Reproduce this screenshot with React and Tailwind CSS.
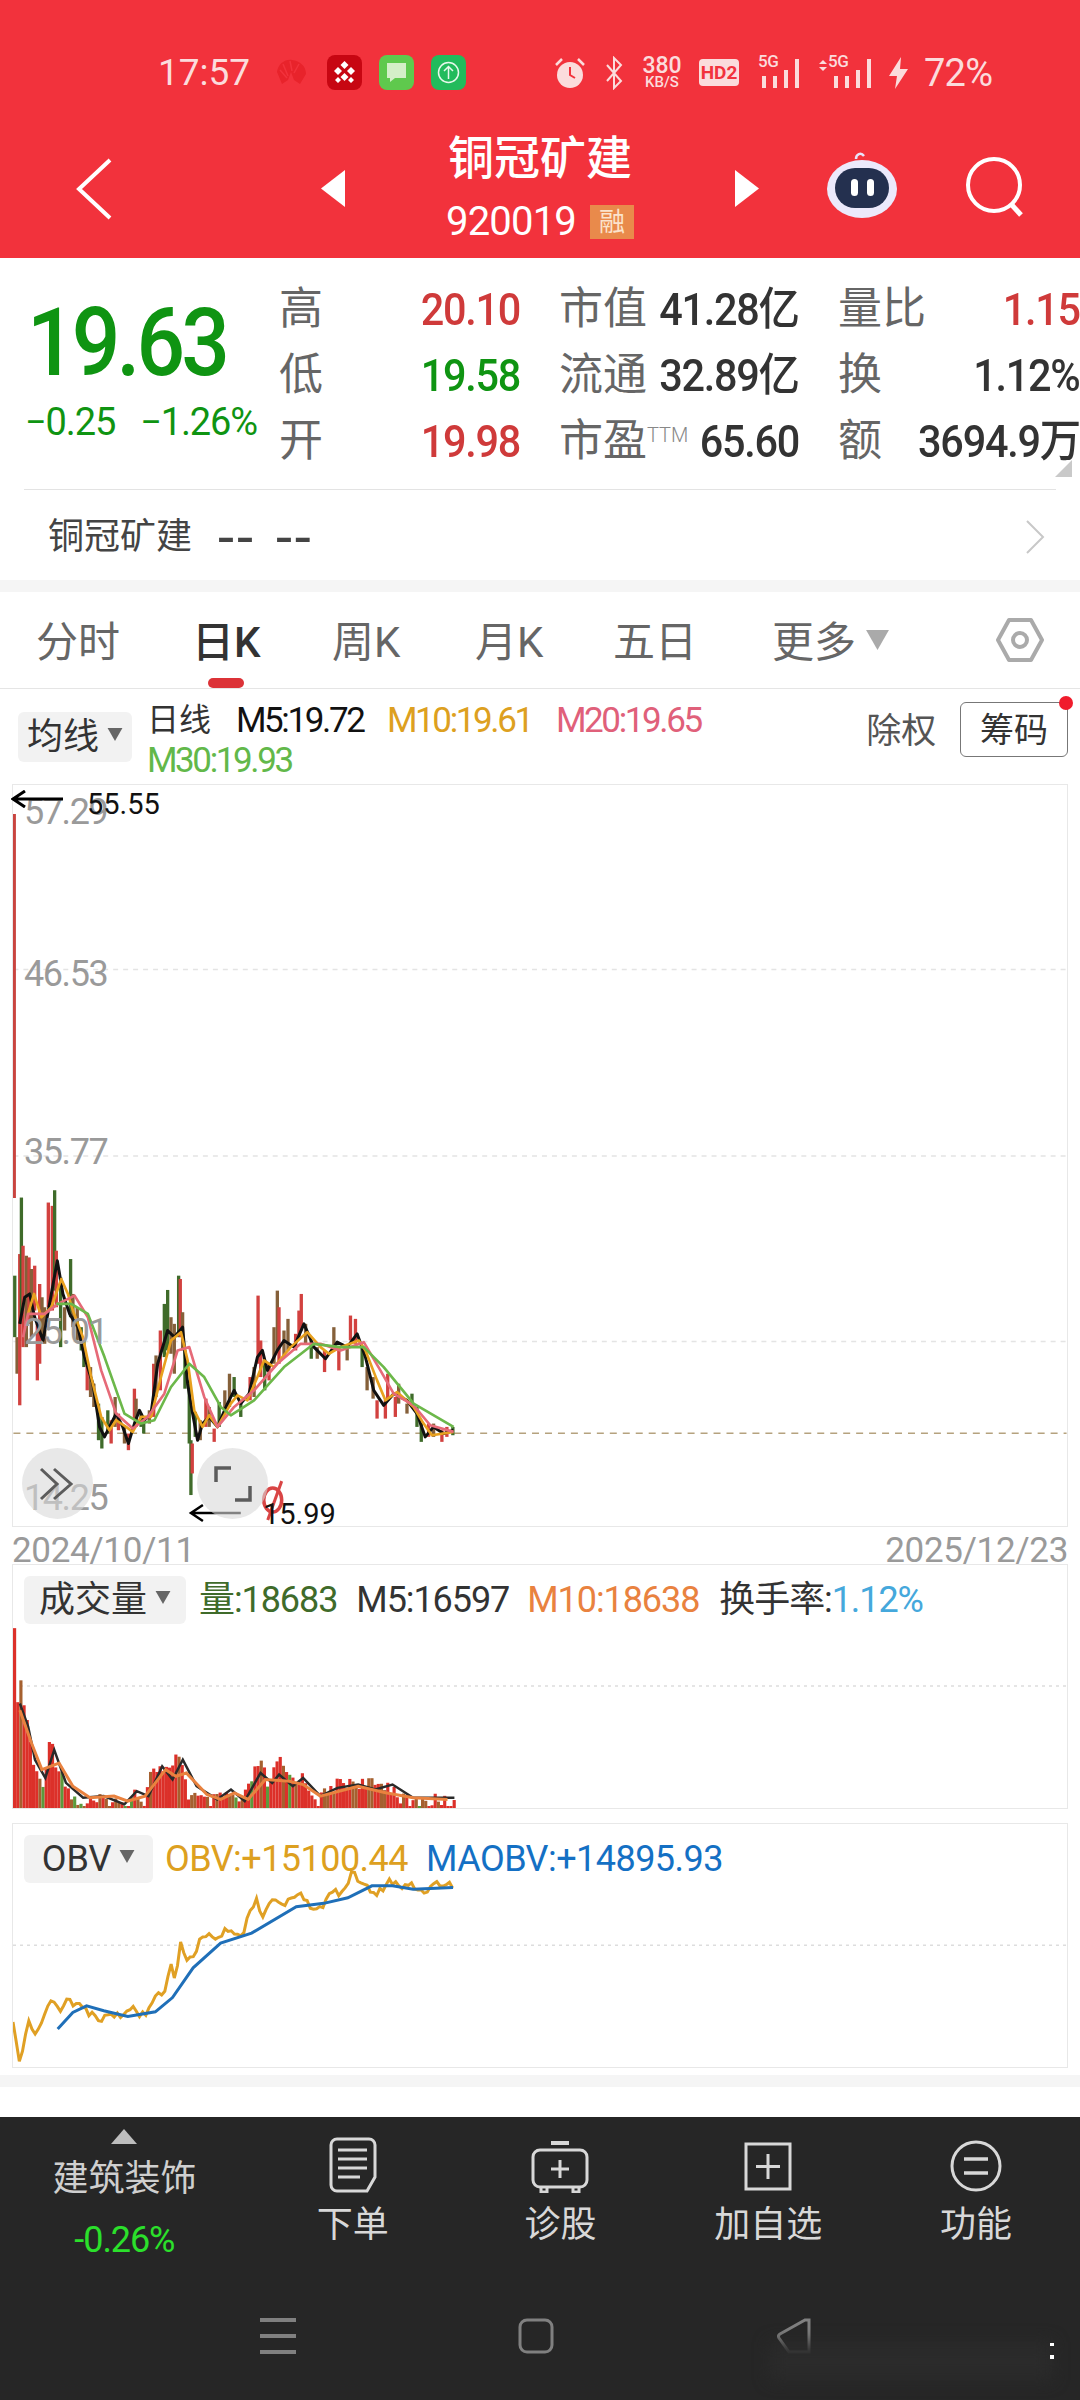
import React from 'react';

const RED = '#d2413f';
const GRN = '#3f6b2a';
const BRN = '#85603a';

// wicks traced in zoom coordinates: [x, top, bottom, colour]
const candles = [
  [40,375,560,GRN],[47,560,670,BRN],[55,310,765,RED],[60,140,520,GRN],[65,285,590,RED],[75,315,590,BRN],[83,320,520,RED],[90,355,560,BRN],
  [100,345,480,RED],[108,520,690,RED],[115,400,640,RED],[122,440,560,BRN],[130,470,580,BRN],[141,155,470,RED],[153,165,480,RED],[160,118,420,GRN],
  [165,300,470,RED],[178,380,590,GRN],[190,470,540,BRN],[208,325,500,GRN],[215,430,530,BRN],[228,470,570,BRN],[240,530,600,GRN],[248,570,650,GRN],
  [258,640,720,RED],[268,650,740,BRN],[278,700,770,BRN],[292,760,870,GRN],[302,800,895,GRN],[320,780,850,GRN],[330,810,880,RED],[342,740,830,BRN],
  [352,790,840,RED],[370,830,880,BRN],[382,850,900,RED],[400,715,810,RED],[405,745,830,BRN],[420,790,830,GRN],[428,810,850,GRN],[445,780,820,BRN],
  [458,640,800,RED],[465,615,740,BRN],[478,540,720,RED],[490,460,620,GRN],[500,418,600,GRN],[510,500,610,BRN],[520,520,670,BRN],[533,375,560,GRN],
  [538,385,560,RED],[545,485,600,BRN],[552,600,715,GRN],[565,690,880,GRN],[570,870,1035,GRN],[574,880,970,RED],[583,785,860,GRN],[598,810,870,BRN],
  [615,745,830,RED],[625,770,830,BRN],[640,835,875,RED],[655,755,830,GRN],[672,720,780,BRN],[686,670,770,BRN],[700,680,740,GRN],[720,750,800,GRN],
  [748,680,750,RED],[760,650,740,BRN],[772,435,640,RED],[780,570,680,RED],[792,640,720,GRN],[805,640,690,RED],[820,530,640,BRN],[830,420,600,BRN],
  [835,470,640,RED],[850,540,620,BRN],[862,505,600,BRN],[885,550,600,RED],[895,480,560,RED],[902,430,540,RED],[915,520,580,BRN],[932,570,625,GRN],
  [950,590,625,BRN],[972,600,665,RED],[1000,530,600,BRN],[1015,590,660,RED],[1040,590,630,BRN],[1050,495,570,RED],[1065,505,580,RED],[1085,590,650,GRN],
  [1100,650,720,BRN],[1118,680,745,BRN],[1130,750,805,RED],[1155,750,805,RED],[1162,670,750,RED],[1185,740,800,RED],[1195,700,760,BRN],[1220,760,790,BRN],
  [1235,730,770,GRN],[1250,770,830,GRN],[1263,820,875,GRN],[1285,820,860,RED],[1300,820,860,BRN],[1325,840,875,RED],[1340,830,860,RED],[1358,830,855,GRN],
];

const ma5 = '55,520 70,440 85,430 100,500 125,570 150,430 168,330 185,430 205,490 230,530 250,620 275,700 295,830 310,860 325,830 345,790 365,830 382,880 400,820 415,780 430,810 450,790 470,640 500,540 520,560 545,530 560,700 575,790 590,870 605,820 625,800 650,830 680,760 700,720 720,760 745,730 770,620 785,600 800,660 830,600 850,570 880,590 910,520 940,590 975,625 1010,575 1040,590 1070,550 1095,620 1120,720 1150,765 1180,730 1220,750 1250,790 1275,860 1300,830 1330,850 1360,840';
const ma10 = '80,490 98,430 120,500 150,470 180,385 200,430 215,480 245,560 270,680 300,800 325,840 345,810 375,830 395,845 420,800 450,800 480,680 510,570 540,545 560,630 580,780 605,830 625,795 650,830 690,760 710,735 740,750 770,680 790,630 820,650 870,590 920,545 960,590 985,610 1020,590 1075,570 1095,600 1130,690 1155,750 1190,725 1240,770 1270,820 1295,855 1360,845';
const ma20 = '65,560 80,490 130,490 170,460 220,435 260,500 300,660 345,790 395,835 440,800 490,730 530,600 565,590 610,740 650,830 700,770 760,720 830,640 900,580 960,580 1020,600 1090,575 1140,660 1180,730 1240,765 1290,825 1360,845';
const ma30 = '165,460 210,460 260,490 310,620 370,790 420,820 460,810 510,710 565,640 610,680 660,770 690,795 760,750 850,650 940,580 1020,590 1090,590 1150,650 1240,760 1360,830';

const volEnvelope = [[18,262],[24,500],[27,415],[37,530],[48,680],[60,720],[68,565],[78,640],[90,690],[100,750],[120,775],[160,755],[180,790],[190,720],[205,770],[220,655],[232,670],[245,680],[258,610],[270,740],[300,770],[330,745],[350,770],[374,638],[388,720],[402,640],[420,695],[435,690],[460,760],[485,715],[510,700],[535,715],[560,710],[590,770],[640,760],[660,775]];
const interp = (pts, x) => {
  for (let i = 1; i < pts.length; i++) {
    const [x0, y0] = pts[i - 1];
    const [x1, y1] = pts[i];
    if (x <= x1) return y0 + ((y1 - y0) * (x - x0)) / (x1 - x0);
  }
  return pts[pts.length - 1][1];
};
const rand = (i) => {
  const v = Math.sin(i * 12.9898) * 43758.5453;
  return v - Math.floor(v);
};
const volBars = Array.from({ length: 140 }, (_, i) => {
  const x = 18 + i * 4.6;
  const top = Math.min(interp(volEnvelope, x) + rand(i) * 45, 800);
  const r = rand(i + 300);
  return { x, top, color: r > 0.9 ? '#5c9a3c' : r > 0.72 ? '#a5602f' : '#dc3029' };
});
const volMa5 = '28,490 40,560 50,660 65,715 78,630 95,730 120,775 150,770 180,795 198,755 215,770 235,680 250,720 265,660 285,740 315,780 335,750 355,785 378,700 395,730 405,705 425,740 440,715 465,770 490,745 520,735 545,750 570,735 600,775 640,775 660,775';
const volMa10 = '28,510 45,610 60,690 85,670 105,740 130,775 165,770 185,785 210,770 240,690 255,710 270,700 300,765 320,780 340,760 360,780 385,720 420,725 440,735 465,770 520,740 560,760 600,775 650,780';

const obvBase = [[18,630],[27,765],[40,635],[50,680],[62,625],[75,550],[85,610],[98,550],[108,585],[120,590],[142,630],[160,605],[180,622],[192,585],[200,610],[215,600],[225,545],[235,565],[248,465],[255,505],[262,390],[270,440],[277,450],[295,365],[310,380],[335,350],[350,375],[372,258],[380,310],[400,255],[410,290],[420,265],[435,238],[448,285],[470,285],[482,230],[495,245],[512,185],[525,210],[545,255],[565,205],[585,230],[597,215],[612,240],[635,215],[658,218]];
// the line is jagged day to day
const obvLine = Array.from({ length: 140 }, (_, i) => {
  const x = 18 + i * 4.6;
  return `${x},${interp(obvBase, x) + (rand(i + 77) - 0.5) * 22}`;
}).join(' ');
const maobvLine = '83,655 105,605 125,585 150,600 185,617 225,603 250,560 280,470 320,395 365,365 430,285 470,275 505,258 540,222 570,222 600,232 658,227';

const Caret = ({ className }) => (
  <svg viewBox="0 0 16 14" className={className}><path d="M0 0h16L8 14z" fill="currentColor" /></svg>
);

const Stat = ({ label, value, color }) => (
  <div className="flex items-center justify-between h-[66px] pt-[2px]">
    <span className="text-[44px] leading-none text-[#666] whitespace-nowrap">{label}</span>
    <span className={`inline-block origin-right scale-x-[.92] text-[45px] leading-none font-medium tracking-[-0.03em] whitespace-nowrap ${color}`}>{value}</span>
  </div>
);

const Chip = ({ children, className }) => (
  <div className={`flex items-center justify-center gap-[8px] h-[48px] bg-[#f2f2f2] rounded-md text-[#333] text-[36px] leading-none ${className}`}>
    {children}
    <Caret className="w-[16px] h-[13px] text-[#666] mb-[6px]" />
  </div>
);

const Signal = ({ className, wide }) => (
  <div className={`relative ${className}`}>
    <span className={`absolute top-[-3px] text-[17px] leading-none font-medium tracking-[-0.03em] ${wide ? 'left-[12px]' : 'left-0'}`}>5G</span>
    <svg viewBox={wide ? '0 0 61 34' : '14 0 46 34'} className="w-full h-full">
      <path d="M18 20h4v12h-4zM29 20h4v12h-4zM40 14h4v18h-4zM51 3h4v29h-4z" fill="#fbdcdc" />
      {wide && <path d="M3 8l4-4 4 4zM3 11h8l-4 4z" fill="#fbdcdc" />}
    </svg>
  </div>
);

const StatusBar = () => (
  <div className="flex items-center h-[35px] pl-[158px] text-[#fbdcdc]">
    <span className="text-[37px] leading-none w-[92px]">17:57</span>
    <svg viewBox="0 0 33 30" className="w-[33px] h-[30px] ml-[25px]">
      <path d="M2 14C3 6 10 1 17 2c8 1 14 6 14 14l-6 10-6-4-3-8-3 8-6 4z" fill="#e8232b" />
      <path d="M8 6l5 12M15 3l2 10M24 6l-5 9M5 12l7 8" stroke="#f2323c" strokeWidth="1.5" />
    </svg>
    <svg viewBox="0 0 35 35" className="w-[35px] h-[35px] ml-[19px]">
      <rect width="35" height="35" rx="8" fill="#c70612" />
      <path d="M17.5 6l4 4-4 4-4-4zM11 12l4 4-4 4-4-4zM24 12l4 4-4 4-4-4zM17.5 18l4 4-4 4-4-4zM11 22l3 3-3 3-3-3zM24 22l3 3-3 3-3-3z" fill="#fff" />
    </svg>
    <svg viewBox="0 0 35 35" className="w-[35px] h-[35px] ml-[17px]">
      <rect width="35" height="35" rx="8" fill="#5fc94d" />
      <path d="M8 8h19v15H16l-5 4v-4H8z" fill="#d4efc8" />
    </svg>
    <svg viewBox="0 0 35 35" className="w-[35px] h-[35px] ml-[17px]">
      <rect width="35" height="35" rx="8" fill="#22bb5c" />
      <circle cx="17.5" cy="17.5" r="10" fill="none" stroke="#e6f8ec" strokeWidth="1.5" />
      <path d="M17.5 24V12M13 16l4.500-4.500L22 16" fill="none" stroke="#e6f8ec" strokeWidth="1.500" />
    </svg>
    <svg viewBox="0 0 32 34" className="w-[32px] h-[34px] ml-[88px]">
      <circle cx="16" cy="19" r="13" fill="#fbdcdc" />
      <path d="M16 11v8l5 3" fill="none" stroke="#f2323c" strokeWidth="2" />
      <path d="M2 9l6-6M30 9l-6-6" stroke="#fbdcdc" strokeWidth="2.500" />
    </svg>
    <svg viewBox="0 0 20 34" className="w-[20px] h-[34px] ml-[18px]">
      <path d="M3 9l14 16-7 7V2l7 7L3 25" fill="none" stroke="#fbdcdc" strokeWidth="2" />
    </svg>
    <div className="flex flex-col items-center w-[46px] ml-[15px] font-medium">
      <span className="text-[23px] leading-[19px]">380</span>
      <span className="text-[15px] leading-[15px]">KB/S</span>
    </div>
    <div className="flex items-center justify-center w-[40px] h-[27px] ml-[14px] rounded bg-[#fbdcdc] text-[#f2323c] text-[19px] font-bold leading-none">HD2</div>
    <Signal className="w-[46px] h-[34px] ml-[19px]" />
    <Signal className="w-[61px] h-[34px] ml-[12px]" wide />
    <svg viewBox="0 0 24 34" className="w-[24px] h-[34px] ml-[10px]">
      <path d="M14 1L2 20h8l-2 13 13-20h-8z" fill="#fbdcdc" />
    </svg>
    <span className="text-[38px] leading-none ml-[13px] tracking-[-0.02em]">72%</span>
  </div>
);

const Header = () => (
  <div className="h-[258px] bg-[#f2323c] pt-[55px]">
    <StatusBar />
    <div className="flex items-center h-[103px] mt-[47px] pl-[76px]">
      <svg viewBox="0 0 36 62" className="w-[36px] h-[62px]">
        <path d="M34 2L3 31l31 29" fill="none" stroke="#fff" strokeWidth="4" />
      </svg>
      <svg viewBox="0 0 24 37" className="w-[24px] h-[37px] ml-[209px]"><path d="M24 0v37L0 18.500z" fill="#fff" /></svg>
      <div className="flex flex-col items-center w-[390px] text-white -mt-[3px]">
        <span className="text-[46px] leading-[46px] font-medium">铜冠矿建</span>
        <div className="flex items-center gap-[14px] mt-[24px]">
          <span className="text-[40px] leading-[34px] tracking-[-0.02em]">920019</span>
          <span className="flex items-center justify-center w-[44px] h-[34px] bg-[#e98a4b] text-[#fbe3cc] text-[26px] leading-none">融</span>
        </div>
      </div>
      <svg viewBox="0 0 24 37" className="w-[24px] h-[37px]"><path d="M0 0v37l24-18.500z" fill="#fff" /></svg>
      <svg viewBox="0 0 72 67" className="w-[72px] h-[67px] ml-[67px] -mt-[8px]">
        <path d="M30 8c0-5 5-7 8-3" fill="none" stroke="#e8e4fb" strokeWidth="2.500" />
        <ellipse cx="36" cy="38" rx="35" ry="29" fill="#ece9fb" />
        <rect x="9" y="17" width="54" height="40" rx="20" fill="#24304f" />
        <rect x="25" y="28" width="7" height="17" rx="3.500" fill="#fff" />
        <rect x="41" y="28" width="7" height="17" rx="3.500" fill="#fff" />
      </svg>
      <svg viewBox="0 0 62 62" className="w-[62px] h-[62px] ml-[67px] -mt-[4px]">
        <circle cx="29" cy="29" r="26" fill="none" stroke="#fff" strokeWidth="4" />
        <path d="M46 48l10 11" stroke="#fff" strokeWidth="5" />
      </svg>
    </div>
  </div>
);

const Quote = () => (
  <div className="relative h-[322px] bg-white">
    <div className="flex pt-[17px]">
      <div className="flex flex-col w-[280px] pl-[25px] text-[#0f9412]">
        <span className="inline-block origin-left scale-x-[.91] text-[94px] leading-[88px] mt-[24px] ml-[2px] font-medium tracking-[-0.045em]">19.63</span>
        <div className="flex gap-[25px] mt-[16px] text-[38px] leading-none tracking-[-0.03em] whitespace-nowrap">
          <span>−0.25</span>
          <span>−1.26%</span>
        </div>
      </div>
      <div className="grid grid-cols-[241px_240px_242px] gap-x-[39px]">
        <Stat label="高" value="20.10" color="text-[#cf3a3a]" />
        <Stat label="市值" value="41.28亿" color="text-[#333]" />
        <Stat label="量比" value="1.15" color="text-[#cf3a3a]" />
        <Stat label="低" value="19.58" color="text-[#0f9412]" />
        <Stat label="流通" value="32.89亿" color="text-[#333]" />
        <Stat label="换" value="1.12%" color="text-[#333]" />
        <Stat label="开" value="19.98" color="text-[#cf3a3a]" />
        <Stat label={<>市盈<sup className="text-[20px] font-light text-[#888] top-[-14px] align-baseline relative">TTM</sup></>} value="65.60" color="text-[#333]" />
        <Stat label="额" value="3694.9万" color="text-[#333]" />
      </div>
    </div>
    <div className="absolute right-[8px] top-[202px] w-0 h-0 border-l-[17px] border-l-transparent border-b-[17px] border-b-[#c9c9c9]" />
    <div className="h-[1px] bg-[#e3e3e3] mx-[24px] mt-[16px]" />
    <div className="flex items-center h-[90px] pl-[48px] pr-[35px] pt-[3px]">
      <span className="text-[36px] leading-none text-[#444]">铜冠矿建</span>
      <span className="text-[58px] leading-none text-[#444] ml-[26px] tracking-[0.05em]">--</span>
      <span className="text-[58px] leading-none text-[#444] ml-[20px] tracking-[0.05em]">--</span>
      <svg viewBox="0 0 20 34" className="w-[20px] h-[34px] ml-auto">
        <path d="M2 1l16 16L2 33" fill="none" stroke="#c8c8c8" strokeWidth="2" />
      </svg>
    </div>
  </div>
);

const Tab = ({ width, children, active }) => (
  <div className={`relative flex items-center h-full pt-[6px] ${width} text-[42px] leading-none ${active ? 'text-[#333] font-medium' : 'text-[#666]'}`}>
    {children}
  </div>
);

const Tabs = () => (
  <div className="flex items-center h-[97px] pl-[36px] border-b border-[#e5e5e5]">
    <Tab width="w-[156px]">分时</Tab>
    <Tab width="w-[140px]" active>
      日K
      <div className="absolute left-[16px] bottom-0 w-[36px] h-[10px] bg-[#dc3237] rounded-full" />
    </Tab>
    <Tab width="w-[143px]">周K</Tab>
    <Tab width="w-[138px]">月K</Tab>
    <Tab width="w-[159px]">五日</Tab>
    <Tab width="w-[224px]">
      更多
      <Caret className="w-[23px] h-[20px] text-[#aaa] ml-[10px] mb-[6px]" />
    </Tab>
    <svg viewBox="0 0 48 46" className="w-[48px] h-[46px]">
      <path d="M13 3h22l11 20-11 20H13L2 23z" fill="none" stroke="#aaa" strokeWidth="4" strokeLinejoin="round" />
      <circle cx="24" cy="23" r="7" fill="none" stroke="#aaa" strokeWidth="4" />
    </svg>
  </div>
);

const Legend = () => (
  <div className="flex h-[95px] pl-[18px] pr-[12px]">
    <Chip className="w-[114px] h-[50px] mt-[23px] text-[34px]">均线</Chip>
    <div className="flex flex-col ml-[15px] text-[35px] leading-none tracking-[-0.068em] pt-[13px] w-[701px]">
      <div className="flex items-center h-[36px]">
        <span className="text-[#333] w-[89px] text-[32px] tracking-normal">日线</span>
        <span className="text-[#111] w-[151px]">M5:19.72</span>
        <span className="text-[#dda020] w-[169px]">M10:19.61</span>
        <span className="text-[#e0607a]">M20:19.65</span>
      </div>
      <span className="text-[#62b84a] mt-[5px]">M30:19.93</span>
    </div>
    <span className="text-[35px] leading-none text-[#555] mt-[25px] ml-[19px] w-[94px]">除权</span>
    <div className="relative flex items-center justify-center w-[108px] h-[55px] mt-[13px] border border-[#777] rounded-md text-[34px] leading-none text-[#333]">
      筹码
      <div className="absolute -right-[6px] -top-[7px] w-[14px] h-[14px] rounded-full bg-[#f01c2c]" />
    </div>
  </div>
);

const PriceLabel = ({ className, children }) => (
  <span className={`absolute left-[11px] text-[#9a9a9a] text-[36px] tracking-[-0.04em] leading-none ${className}`}>{children}</span>
);

const PriceChart = () => (
  <div className="relative h-[743px] mx-[12px] border border-[#e8e8e8]">
    <svg viewBox="12 783 1056 743" className="absolute inset-0 w-full h-full">
      {[968, 1155, 1341].map((y) => (
        <line key={y} x1="12" x2="1068" y1={y} y2={y} stroke="#e4e4e4" strokeWidth="1.500" strokeDasharray="5 5" />
      ))}
      <line x1="12" x2="1068" y1="1433" y2="1433" stroke="#b5a27e" strokeWidth="1.500" strokeDasharray="7 6" />
      <line x1="13" x2="13" y1="812" y2="1197" stroke="#c9443f" strokeWidth="3" />
      <g transform="translate(0 1150) scale(0.3333)">
        {candles.map(([x, t, b, c], i) => (
          <line key={i} x1={x} x2={x} y1={t} y2={b} stroke={c} strokeWidth="10" />
        ))}
        <polyline points={ma5} fill="none" stroke="#111" strokeWidth="9" strokeLinejoin="round" />
        <polyline points={ma10} fill="none" stroke="#e8a11f" strokeWidth="8" strokeLinejoin="round" />
        <polyline points={ma20} fill="none" stroke="#e66a78" strokeWidth="8" strokeLinejoin="round" />
        <polyline points={ma30} fill="none" stroke="#6cb84a" strokeWidth="8" strokeLinejoin="round" />
      </g>
      <path d="M240 1513H190M202 1505l-12 8 12 8" fill="none" stroke="#000" strokeWidth="2.500" />
      <ellipse cx="272" cy="1500" rx="9" ry="12" fill="none" stroke="#d94545" strokeWidth="3.500" />
      <path d="M281 1481l-14 39" stroke="#d94545" strokeWidth="3" />
    </svg>
    <PriceLabel className="top-[9px]">57.29</PriceLabel>
    <PriceLabel className="top-[171px]">46.53</PriceLabel>
    <PriceLabel className="top-[349px]">35.77</PriceLabel>
    <PriceLabel className="top-[529px]">25.01</PriceLabel>
    <PriceLabel className="top-[695px]">14.25</PriceLabel>
    {/* the high marker sits on top of the axis label */}
    <svg viewBox="0 0 52 18" className="absolute left-[-2px] top-[5px] w-[52px] h-[18px]">
      <path d="M52 9H2M14 1L2 9l12 8" fill="none" stroke="#000" strokeWidth="3" />
    </svg>
    <span className="absolute left-[74px] top-[5px] text-[29px] leading-none text-[#111]">55.55</span>
    <span className="absolute left-[250px] top-[715px] text-[29px] leading-none text-[#111]">15.99</span>
    <div className="absolute left-[9px] top-[663px] flex items-center justify-center w-[71px] h-[71px] rounded-full bg-[#d8d8d8]/60">
      <svg viewBox="0 0 40 34" className="w-[40px] h-[34px]">
        <path d="M3 2l16 15L3 32M16 2l17 15-17 15" fill="none" stroke="#5c5c5c" strokeWidth="3" />
      </svg>
    </div>
    <div className="absolute left-[184px] top-[663px] flex items-center justify-center w-[71px] h-[71px] rounded-full bg-[#d8d8d8]/60">
      <svg viewBox="0 0 38 36" className="w-[38px] h-[36px]">
        <path d="M2 16V2h15M36 20v14H21" fill="none" stroke="#5c5c5c" strokeWidth="3.500" />
      </svg>
    </div>
  </div>
);

const VolumeChart = () => (
  <div className="relative h-[245px] mx-[12px] border border-[#e8e8e8]">
    <svg viewBox="18 71 1533 735" preserveAspectRatio="none" className="absolute inset-0 w-full h-full">
      <line x1="18" x2="1550" y1="437" y2="437" stroke="#ddd" strokeWidth="1.500" strokeDasharray="3 4" vectorEffect="non-scaling-stroke" />
      {volBars.map((b, i) => (
        <rect key={i} x={b.x} y={b.top} width="4.600" height={808 - b.top} fill={b.color} />
      ))}
      <polyline points={volMa5} fill="none" stroke="#2a2a2a" strokeWidth="2.500" vectorEffect="non-scaling-stroke" />
      <polyline points={volMa10} fill="none" stroke="#e9823f" strokeWidth="3" vectorEffect="non-scaling-stroke" />
    </svg>
    <div className="relative flex items-center h-[48px] mt-[11px] ml-[11px] text-[36px] leading-none tracking-[-0.03em] whitespace-nowrap">
      <Chip className="w-[162px] tracking-normal">成交量</Chip>
      <span className="text-[#3f6b2a] ml-[13px]">量:18683</span>
      <span className="text-[#333] ml-[19px]">M5:16597</span>
      <span className="text-[#e9823f] ml-[18px]">M10:18638</span>
      <span className="text-[#333] ml-[20px]">换手率:</span>
      <span className="text-[#45a8dc]">1.12%</span>
    </div>
  </div>
);

const ObvChart = () => (
  <div className="relative h-[245px] mx-[12px] border border-[#e8e8e8]">
    <svg viewBox="18 35 1533 735" preserveAspectRatio="none" className="absolute inset-0 w-full h-full">
      <line x1="18" x2="1550" y1="402" y2="402" stroke="#ddd" strokeWidth="1.500" strokeDasharray="3 4" vectorEffect="non-scaling-stroke" />
      <polyline points={obvLine} fill="none" stroke="#e0a024" strokeWidth="3" vectorEffect="non-scaling-stroke" />
      <polyline points={maobvLine} fill="none" stroke="#1f6fb8" strokeWidth="3" vectorEffect="non-scaling-stroke" />
    </svg>
    <div className="relative flex items-center h-[48px] mt-[11px] ml-[11px] text-[36px] leading-none tracking-[-0.015em] whitespace-nowrap">
      <Chip className="w-[129px] tracking-normal">OBV</Chip>
      <span className="text-[#dda020] ml-[12px]">OBV:+15100.44</span>
      <span className="text-[#1470c4] ml-[18px]">MAOBV:+14895.93</span>
    </div>
  </div>
);

const ToolItem = ({ icon, label }) => (
  <div className="flex flex-col items-center w-[208px] text-[#d8d8d8]">
    <div className="flex items-end justify-center h-[64px]">{icon}</div>
    <span className="text-[36px] leading-none mt-[14px]">{label}</span>
  </div>
);

const Footer = () => (
  <div className="h-[285px] bg-[#262626]">
    <div className="flex h-[178px] pt-[12px]">
      <div className="flex flex-col items-center w-[249px]">
        <svg viewBox="0 0 26 15" className="w-[26px] h-[15px]"><path d="M13 0l13 15H0z" fill="#bdbdbd" /></svg>
        <span className="text-[36px] leading-none text-[#cfcfcf] mt-[17px]">建筑装饰</span>
        <span className="text-[36px] leading-none text-[#2be02b] mt-[25px] tracking-[-0.03em]">-0.26%</span>
      </div>
      <ToolItem label="下单" icon={
        <svg viewBox="0 0 48 56" className="w-[48px] h-[56px]">
          <path d="M8 2h32a6 6 0 0 1 6 6v32l-8 14H8a6 6 0 0 1-6-6V8a6 6 0 0 1 6-6z" fill="none" stroke="#d8d8d8" strokeWidth="3" />
          <path d="M9 13h29M9 22h29M9 31h29M9 40h22" stroke="#d8d8d8" strokeWidth="3" />
        </svg>
      } />
      <ToolItem label="诊股" icon={
        <svg viewBox="0 0 58 52" className="w-[58px] h-[52px]">
          <path d="M20 2h18" stroke="#d8d8d8" strokeWidth="4" />
          <rect x="2" y="9" width="54" height="37" rx="7" fill="none" stroke="#d8d8d8" strokeWidth="3" />
          <path d="M10 47v4h6v-4M42 47v4h6v-4M29 19v18M20 28h18" fill="none" stroke="#d8d8d8" strokeWidth="3" />
        </svg>
      } />
      <ToolItem label="加自选" icon={
        <svg viewBox="0 0 48 49" className="w-[48px] h-[49px] mb-[2px]">
          <rect x="2" y="2" width="44" height="45" fill="none" stroke="#d8d8d8" strokeWidth="3" />
          <path d="M24 12v25M12 24.500h24" stroke="#d8d8d8" strokeWidth="3" />
        </svg>
      } />
      <ToolItem label="功能" icon={
        <svg viewBox="0 0 52 52" className="w-[52px] h-[52px] mb-[1px]">
          <circle cx="26" cy="26" r="24" fill="none" stroke="#d8d8d8" strokeWidth="3" />
          <path d="M14 19h24M14 33h24" stroke="#d8d8d8" strokeWidth="3.500" />
        </svg>
      } />
    </div>
    <div className="relative flex items-start h-[107px] pt-[23px] pl-[260px]">
      <svg viewBox="0 0 36 36" className="w-[36px] h-[36px]">
        <path d="M0 2h36M0 18h36M0 34h36" stroke="#808080" strokeWidth="4" />
      </svg>
      <svg viewBox="0 0 36 36" className="w-[36px] h-[36px] ml-[222px]">
        <rect x="2" y="2" width="32" height="32" rx="7" fill="none" stroke="#808080" strokeWidth="3" />
      </svg>
      <svg viewBox="0 0 36 36" className="w-[36px] h-[36px] ml-[223px]">
        <path d="M32 2v32H12L2 20a3 3 0 0 1 1-4L28 2z" fill="none" stroke="#808080" strokeWidth="3" />
      </svg>
      <div className="absolute left-[770px] top-[47px] w-[282px] h-[38px] bg-[#2b2b2b] blur-sm" />
      <div className="absolute left-[1050px] top-[48px] w-[4px] h-[3px] bg-white" />
      <div className="absolute left-[1050px] top-[60px] w-[4px] h-[4px] bg-white" />
    </div>
  </div>
);

export default function App() {
  return (
    <div className="w-[1080px] h-[2400px] overflow-hidden bg-white font-['Roboto','Noto_Sans_CJK_SC',sans-serif]">
      <Header />
      <Quote />
      <div className="h-[12px] bg-[#f5f5f5]" />
      <Tabs />
      <Legend />
      <PriceChart />
      <div className="flex justify-between h-[37px] pt-[9px] px-[12px] items-center text-[35px] tracking-[-0.01em] leading-none text-[#9a9a9a]">
        <span>2024/10/11</span>
        <span>2025/12/23</span>
      </div>
      <VolumeChart />
      <div className="h-[14px]" />
      <ObvChart />
      <div className="h-[7px]" />
      <div className="h-[12px] bg-[#f5f5f5]" />
      <div className="h-[30px]" />
      <Footer />
    </div>
  );
}
